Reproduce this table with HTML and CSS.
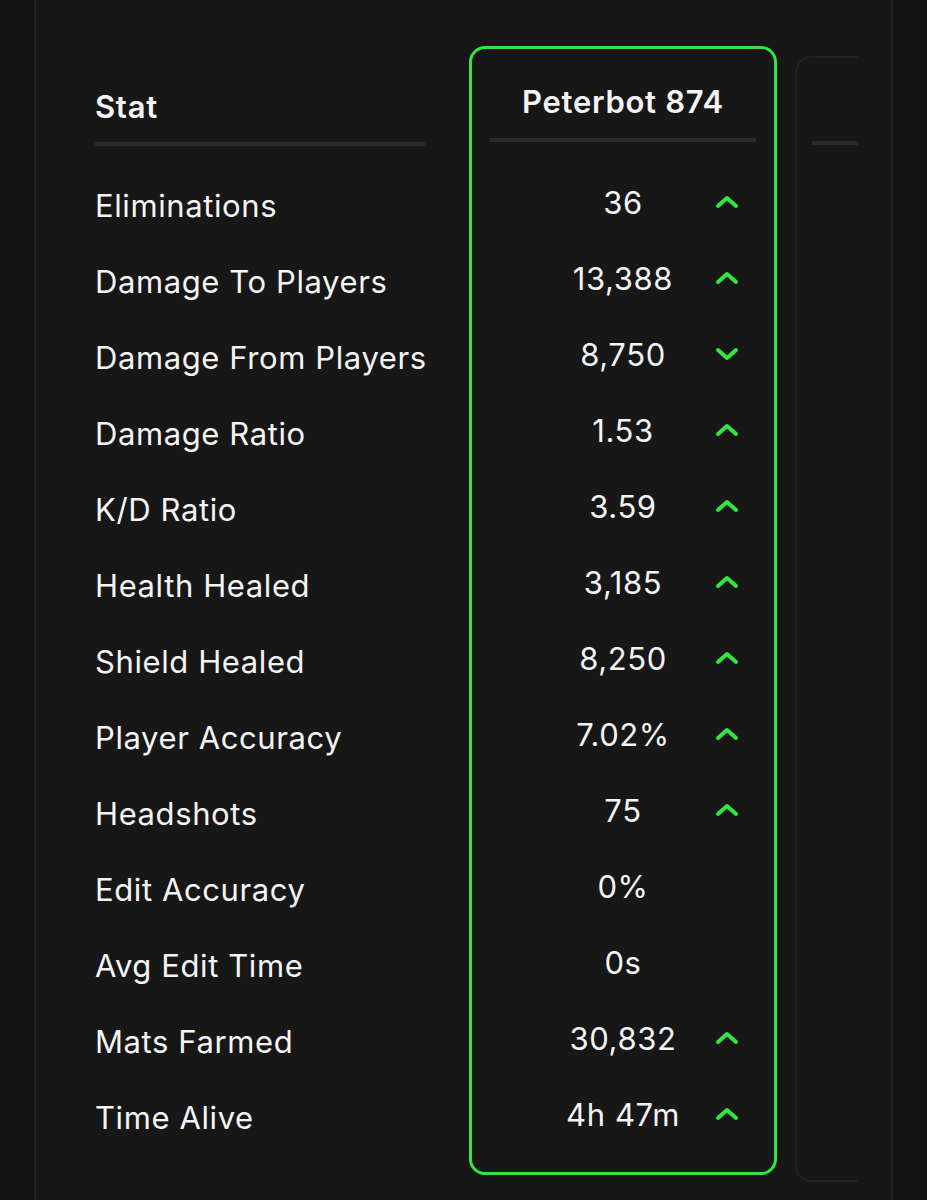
FILE: index.html
```html
<!DOCTYPE html>
<html lang="en">
<head>
    <meta charset="UTF-8">
    <title>Stat Comparison</title>
    <link rel="stylesheet" href="styles.css">
</head>
<body>
    <div class="panel">
        <div class="scroller">
            <div class="stat-col">
                <div class="col-head">Stat</div>
                <div class="rule"></div>
                <div class="label">Eliminations</div>
                <div class="label">Damage To Players</div>
                <div class="label">Damage From Players</div>
                <div class="label">Damage Ratio</div>
                <div class="label">K/D Ratio</div>
                <div class="label">Health Healed</div>
                <div class="label">Shield Healed</div>
                <div class="label">Player Accuracy</div>
                <div class="label">Headshots</div>
                <div class="label">Edit Accuracy</div>
                <div class="label">Avg Edit Time</div>
                <div class="label">Mats Farmed</div>
                <div class="label">Time Alive</div>
            </div>

            <div class="card selected">
                <div class="card-head">Peterbot 874</div>
                <div class="rule"></div>
                <div class="row"><span class="value">36</span><svg class="trend" viewBox="0 0 24 14"><polyline points="3,11 12,3 21,11"/></svg></div>
                <div class="row"><span class="value">13,388</span><svg class="trend" viewBox="0 0 24 14"><polyline points="3,11 12,3 21,11"/></svg></div>
                <div class="row"><span class="value">8,750</span><svg class="trend" viewBox="0 0 24 14"><polyline points="3,3 12,11 21,3"/></svg></div>
                <div class="row"><span class="value">1.53</span><svg class="trend" viewBox="0 0 24 14"><polyline points="3,11 12,3 21,11"/></svg></div>
                <div class="row"><span class="value">3.59</span><svg class="trend" viewBox="0 0 24 14"><polyline points="3,11 12,3 21,11"/></svg></div>
                <div class="row"><span class="value">3,185</span><svg class="trend" viewBox="0 0 24 14"><polyline points="3,11 12,3 21,11"/></svg></div>
                <div class="row"><span class="value">8,250</span><svg class="trend" viewBox="0 0 24 14"><polyline points="3,11 12,3 21,11"/></svg></div>
                <div class="row"><span class="value">7.02%</span><svg class="trend" viewBox="0 0 24 14"><polyline points="3,11 12,3 21,11"/></svg></div>
                <div class="row"><span class="value">75</span><svg class="trend" viewBox="0 0 24 14"><polyline points="3,11 12,3 21,11"/></svg></div>
                <div class="row"><span class="value">0%</span></div>
                <div class="row"><span class="value">0s</span></div>
                <div class="row"><span class="value">30,832</span><svg class="trend" viewBox="0 0 24 14"><polyline points="3,11 12,3 21,11"/></svg></div>
                <div class="row"><span class="value">4h 47m</span><svg class="trend" viewBox="0 0 24 14"><polyline points="3,11 12,3 21,11"/></svg></div>
            </div>

            <div class="card other">
                <div class="card-head">&nbsp;</div>
                <div class="rule"></div>
            </div>
        </div>
    </div>
</body>
</html>
```

FILE: styles.css
```css
body {
    margin: 0;
    background-color: #121212;
    font-family: Inter, "Noto Sans", sans-serif;
    color: #f4f4f4;
}
.panel {
    margin-left: 34px;
    width: 855px;
    height: 1200px;
    background: #171717;
    border-left: 2px solid #222222;
    border-right: 2px solid #222222;
}
.scroller {
    width: 822px;
    height: 1200px;
    overflow: hidden;
    display: flex;
    align-items: flex-start;
    padding-top: 46px;
    padding-left: 59px;
    box-sizing: border-box;
}
.stat-col {
    width: 330px;
    flex-shrink: 0;
    padding-top: 7px;
}
.col-head {
    font-size: 31px;
    font-weight: 600;
    letter-spacing: 0.7px;
    line-height: 40px;
    padding-top: 34px;
    margin-bottom: 15px;
}
.rule {
    height: 4px;
    background: #2a2a2a;
    margin-bottom: 22px;
}
.label {
    height: 76px;
    line-height: 76px;
    font-size: 31px;
    letter-spacing: 0.6px;
    white-space: nowrap;
}
.card {
    flex-shrink: 0;
    width: 308px;
    box-sizing: border-box;
    padding: 0 18px 20px;
    border-radius: 16px;
}
.selected {
    margin-left: 44px;
    border: 3px solid #33e63f;
}
.other {
    margin-left: 18px;
    margin-top: 10px;
    height: 1126px;
    padding-left: 15px;
    border: 2px solid #212121;
}
.other .card-head {
    padding-top: 27px;
}
.card-head {
    font-size: 31px;
    font-weight: 600;
    letter-spacing: 0.7px;
    line-height: 40px;
    padding-top: 33px;
    margin-bottom: 16px;
    text-align: center;
}
.row {
    height: 76px;
    display: grid;
    grid-template-columns: 1fr auto 1fr;
    align-items: center;
}
.value {
    grid-column: 2;
    font-size: 31px;
    letter-spacing: 0.6px;
    padding-top: 1px;
}
.trend {
    grid-column: 3;
    justify-self: end;
    width: 24px;
    height: 14px;
    margin-right: 17px;
    fill: none;
    stroke: #33e63f;
    stroke-width: 4;
    stroke-linecap: round;
    stroke-linejoin: round;
}
```
